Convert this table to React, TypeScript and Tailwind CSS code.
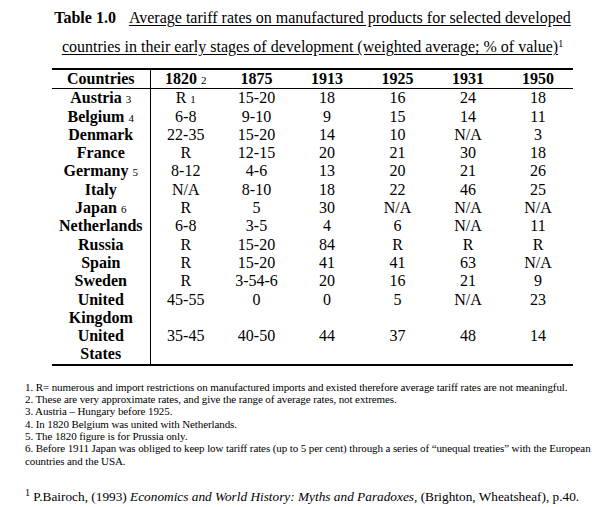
import React from "react";

type Row = { c: string; cn?: string; a: string; an?: string; v: string[] };

const rows: Row[] = [
  { c: "Austria", cn: "3", a: "R", an: "1", v: ["15-20", "18", "16", "24", "18"] },
  { c: "Belgium", cn: "4", a: "6-8", v: ["9-10", "9", "15", "14", "11"] },
  { c: "Denmark", a: "22-35", v: ["15-20", "14", "10", "N/A", "3"] },
  { c: "France", a: "R", v: ["12-15", "20", "21", "30", "18"] },
  { c: "Germany", cn: "5", a: "8-12", v: ["4-6", "13", "20", "21", "26"] },
  { c: "Italy", a: "N/A", v: ["8-10", "18", "22", "46", "25"] },
  { c: "Japan", cn: "6", a: "R", v: ["5", "30", "N/A", "N/A", "N/A"] },
  { c: "Netherlands", a: "6-8", v: ["3-5", "4", "6", "N/A", "11"] },
  { c: "Russia", a: "R", v: ["15-20", "84", "R", "R", "R"] },
  { c: "Spain", a: "R", v: ["15-20", "41", "41", "63", "N/A"] },
  { c: "Sweden", a: "R", v: ["3-54-6", "20", "16", "21", "9"] },
  { c: "United|Kingdom", a: "45-55", v: ["0", "0", "5", "N/A", "23"] },
  { c: "United|States", a: "35-45", v: ["40-50", "44", "37", "48", "14"] },
];

export default function App() {
  return (
    <div className="w-[603px] h-[507px] bg-white text-black font-['Liberation_Serif'] overflow-hidden">
      <div className="ml-[52px] w-[521px]">
        <div className="pt-[3px] text-center text-[16px] leading-[29px] whitespace-nowrap">
          <b>Table 1.0</b>
          <span className="inline-block w-[13px]" />
          <span className="underline underline-offset-[2px]">
            Average tariff rates on manufactured products for selected developed
          </span>
          <br />
          <span className="underline underline-offset-[2px]">
            countries in their early stages of development (weighted average; % of value)
          </span>
          <sup className="text-[10px]">1</sup>
        </div>
        <table className="mt-[7px] w-[521px] table-fixed border-collapse border-t-2 border-b-2 border-black text-[16px] leading-[18.3px] font-['Liberation_Serif']">
          <colgroup>
            <col className="w-[98px]" />
            <col className="w-[71px]" />
            <col className="w-[71px]" />
            <col className="w-[70px]" />
            <col className="w-[71px]" />
            <col className="w-[70px]" />
            <col className="w-[70px]" />
          </colgroup>
          <thead>
            <tr className="border-b border-black h-[18px] font-bold">
              <th className="p-0 border-r border-black text-center">Countries</th>
              <th className="p-0 text-center">
                1820 <span className="text-[11px] font-normal leading-[0]">2</span>
              </th>
              <th className="p-0 text-center">1875</th>
              <th className="p-0 text-center">1913</th>
              <th className="p-0 text-center">1925</th>
              <th className="p-0 text-center">1931</th>
              <th className="p-0 text-center">1950</th>
            </tr>
          </thead>
          <tbody>
            {rows.map((r, i) => {
              const parts = r.c.split("|");
              return (
                <tr key={i}>
                  <td className="p-0 border-r border-black text-center align-top font-bold">
                    {parts.map((p, j) => (
                      <React.Fragment key={j}>
                        {j > 0 && <br />}
                        {p}
                      </React.Fragment>
                    ))}
                    {r.cn && (
                      <>
                        {" "}
                        <span className="text-[11px] font-normal leading-[0]">{r.cn}</span>
                      </>
                    )}
                  </td>
                  <td className="p-0 text-center align-top">
                    {r.a}
                    {r.an && (
                      <>
                        {" "}
                        <span className="text-[11px] leading-[0]">{r.an}</span>
                      </>
                    )}
                  </td>
                  {r.v.map((v, k) => (
                    <td key={k} className="p-0 text-center align-top">
                      {v}
                    </td>
                  ))}
                </tr>
              );
            })}
          </tbody>
        </table>
      </div>
      <div className="ml-[25px] mt-[15px] text-[11px] leading-[12.33px] whitespace-nowrap tracking-[-0.1px]">
        <div>1. R= numerous and import restrictions on manufactured imports and existed therefore average tariff rates are not meaningful.</div>
        <div>2. These are very approximate rates, and give the range of average rates, not extremes.</div>
        <div>3. Austria – Hungary before 1925.</div>
        <div>4. In 1820 Belgium was united with Netherlands.</div>
        <div>5. The 1820 figure is for Prussia only.</div>
        <div>6. Before 1911 Japan was obliged to keep low tariff rates (up to 5 per cent) through a series of “unequal treaties” with the European</div>
        <div>countries and the USA.</div>
      </div>
      <div className="ml-[25px] mt-[22px] text-[13.3px] leading-[16px] whitespace-nowrap">
        <sup className="text-[10px]">1</sup> P.Bairoch, (1993) <i>Economics and World History: Myths and Paradoxes</i>, (Brighton, Wheatsheaf), p.40.
      </div>
    </div>
  );
}
